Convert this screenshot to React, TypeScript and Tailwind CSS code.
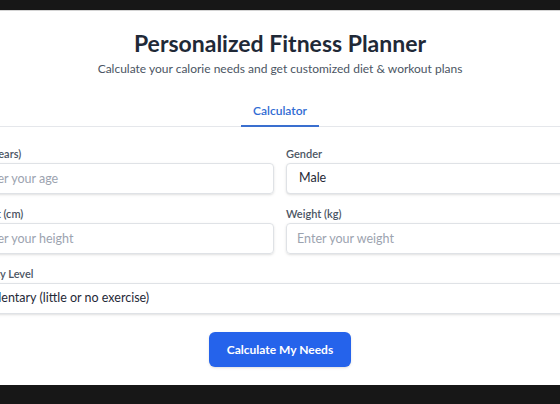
import React from "react";

export default function App() {
  const font = { fontFamily: 'Lato, "Open Sans", sans-serif' };
  return (
    <div className="w-[560px] h-[404px] bg-[#171717] flex flex-col overflow-hidden" style={font}>
      <div className="h-[10px] shrink-0 bg-[#171717]" />
      <div className="h-[375px] shrink-0 bg-white overflow-hidden border-t border-[#d4d4d4]">
        <div className="w-[672px] ml-[-56px] px-6">
          <div className="pt-[16px] text-center">
            <h1 className="text-[23px] leading-[32px] font-bold text-[#1f2937]">Personalized Fitness Planner</h1>
            <p className="mt-[0px] text-[12px] leading-[20px] text-[#4b5563]">
              Calculate your calorie needs and get customized diet &amp; workout plans
            </p>
          </div>
          <div className="mt-[14px] w-[560px] ml-[32px] border-b border-[#e5e7eb] flex justify-center">
            <button className="px-3 pt-[8px] pb-[4px] text-[12px] leading-[20px] text-[#2f6bd3] border-b-2 border-[#3a6fcf] mb-[-1px] font-semibold">
              Calculator
            </button>
          </div>
          <div className="pt-[19px] grid grid-cols-2 gap-x-3 gap-y-[12px]">
            <Field label="Age (years)">
              <input className="w-full h-[31px] px-[10px] rounded border border-[#dfe2e6] shadow-sm text-[12.5px] text-[#1f2937] placeholder:text-[#9ca3af] outline-none" placeholder="Enter your age" />
            </Field>
            <Field label="Gender">
              <select className="w-full h-[31px] px-[12px] rounded border border-[#dfe2e6] shadow-sm text-[12.5px] text-[#1f2937] bg-white appearance-none outline-none">
                <option>Male</option>
                <option>Female</option>
              </select>
            </Field>
            <Field label="Height (cm)">
              <input className="w-full h-[31px] px-[10px] rounded border border-[#dfe2e6] shadow-sm text-[12.5px] text-[#1f2937] placeholder:text-[#9ca3af] outline-none" placeholder="Enter your height" />
            </Field>
            <Field label="Weight (kg)">
              <input className="w-full h-[31px] px-[10px] rounded border border-[#dfe2e6] shadow-sm text-[12.5px] text-[#1f2937] placeholder:text-[#9ca3af] outline-none" placeholder="Enter your weight" />
            </Field>
            <div className="col-span-2">
              <Field label="Activity Level">
                <select className="w-full h-[31px] px-[12px] rounded border border-[#dfe2e6] shadow-sm text-[12.5px] text-[#1f2937] bg-white appearance-none outline-none">
                  <option>Sedentary (little or no exercise)</option>
                </select>
              </Field>
            </div>
          </div>
          <div className="mt-[18px] flex justify-center">
            <button className="w-[142px] h-[35px] rounded-md bg-[#2563eb] shadow-sm text-white text-[12px] font-bold">
              Calculate My Needs
            </button>
          </div>
        </div>
      </div>
      <div className="flex-1 bg-[#171717]" />
    </div>
  );
}

function Field({ label, children }: { label: string; children: React.ReactNode }) {
  return (
    <div className="flex flex-col">
      <label className="text-[11px] leading-[16px] font-semibold text-[#4b5563] mb-[1px]">{label}</label>
      {children}
    </div>
  );
}
